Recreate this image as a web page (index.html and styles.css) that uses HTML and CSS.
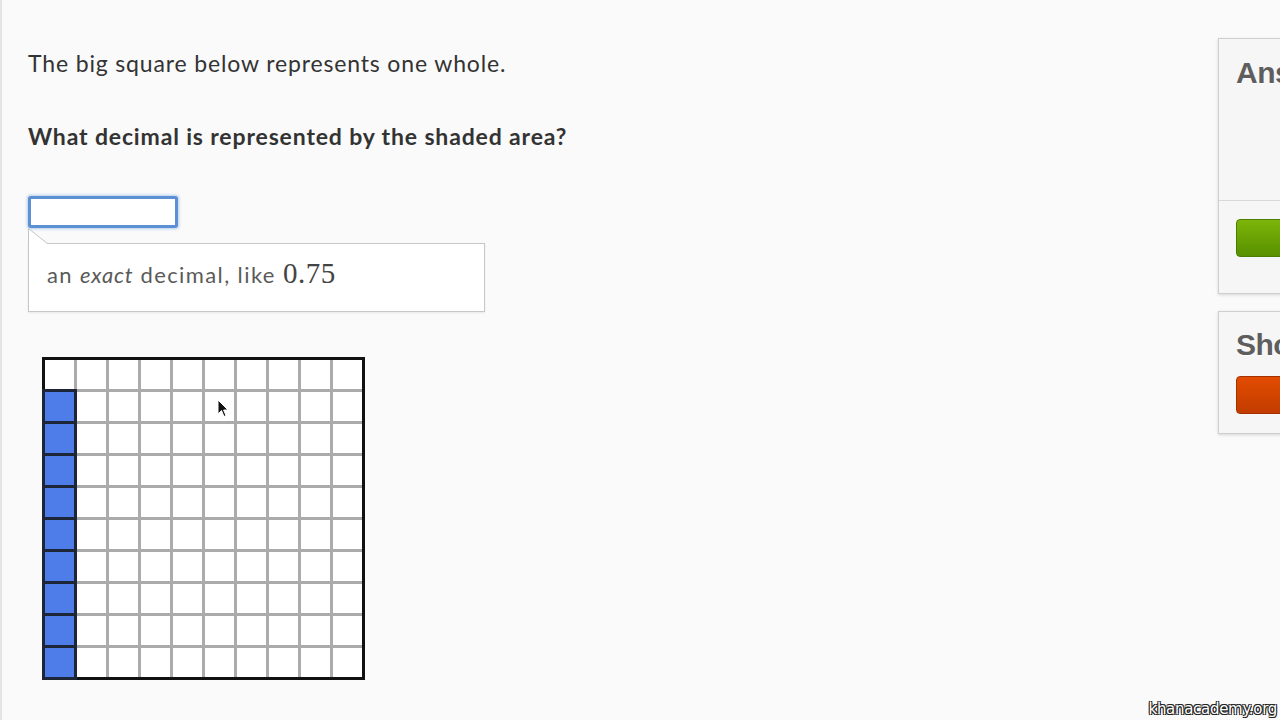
FILE: index.html
```html
<!DOCTYPE html>
<html>
<head>
<meta charset="utf-8">
<link rel="stylesheet" href="styles.css">
</head>
<body>
<div class="page">
  <main class="exercise">
    <p class="intro">The big square below represents one whole.</p>
    <p class="question">What decimal is represented by the shaded area?</p>
    <div class="answer">
      <input class="answer-input" type="text">
      <div class="hint">
        <svg class="tail" width="21" height="16" viewBox="0 0 21 16">
          <path d="M0.5 16 L0.5 0.5 L20 16 Z" fill="#fff"/>
          <path d="M0.5 16 L0.5 0.5 L20 16" fill="none" stroke="#c4c4c4" stroke-width="1"/>
        </svg>
        an <em>exact</em> decimal, like <span class="math">0.75</span>
      </div>
    </div>
    <div class="grid-wrap">
      <div class="grid" id="grid">
        <div class="c"></div><div class="c"></div><div class="c"></div><div class="c"></div><div class="c"></div><div class="c"></div><div class="c"></div><div class="c"></div><div class="c"></div><div class="c"></div>
        <div class="c s"></div><div class="c"></div><div class="c"></div><div class="c"></div><div class="c"></div><div class="c"></div><div class="c"></div><div class="c"></div><div class="c"></div><div class="c"></div>
        <div class="c s"></div><div class="c"></div><div class="c"></div><div class="c"></div><div class="c"></div><div class="c"></div><div class="c"></div><div class="c"></div><div class="c"></div><div class="c"></div>
        <div class="c s"></div><div class="c"></div><div class="c"></div><div class="c"></div><div class="c"></div><div class="c"></div><div class="c"></div><div class="c"></div><div class="c"></div><div class="c"></div>
        <div class="c s"></div><div class="c"></div><div class="c"></div><div class="c"></div><div class="c"></div><div class="c"></div><div class="c"></div><div class="c"></div><div class="c"></div><div class="c"></div>
        <div class="c s"></div><div class="c"></div><div class="c"></div><div class="c"></div><div class="c"></div><div class="c"></div><div class="c"></div><div class="c"></div><div class="c"></div><div class="c"></div>
        <div class="c s"></div><div class="c"></div><div class="c"></div><div class="c"></div><div class="c"></div><div class="c"></div><div class="c"></div><div class="c"></div><div class="c"></div><div class="c"></div>
        <div class="c s"></div><div class="c"></div><div class="c"></div><div class="c"></div><div class="c"></div><div class="c"></div><div class="c"></div><div class="c"></div><div class="c"></div><div class="c"></div>
        <div class="c s"></div><div class="c"></div><div class="c"></div><div class="c"></div><div class="c"></div><div class="c"></div><div class="c"></div><div class="c"></div><div class="c"></div><div class="c"></div>
        <div class="c s"></div><div class="c"></div><div class="c"></div><div class="c"></div><div class="c"></div><div class="c"></div><div class="c"></div><div class="c"></div><div class="c"></div><div class="c"></div>
      </div>
      <svg class="cursor" width="12" height="19" viewBox="0 0 12 19">
        <path d="M1 1 L1 15 L4.5 11.5 L7 17.5 L9 16.6 L6.6 11 L11 11 Z" fill="#111" stroke="#fff" stroke-width="1"/>
      </svg>
    </div>
  </main>
  <aside class="sidebar">
    <section class="panel panel-answer">
      <div class="panel-top">
        <h2 class="panel-title">Answer</h2>
      </div>
      <div class="panel-bottom">
        <button class="btn btn-green">Check Answer</button>
      </div>
    </section>
    <section class="panel panel-show">
      <h2 class="panel-title">Show solution</h2>
      <button class="btn btn-orange">Show hints</button>
    </section>
  </aside>
</div>
<div class="watermark">khanacademy.org</div>
</body>
</html>
```
FILE: styles.css
```css
html, body {
  margin: 0;
  padding: 0;
  overflow: hidden;
  width: 1280px;
  height: 720px;
}
body {
  background: #fafafa;
  font-family: Lato, "Open Sans", sans-serif;
  color: #333;
  position: relative;
  border-left: 2px solid #e4e4e4;
  box-sizing: border-box;
}
.page {
  display: flex;
  align-items: flex-start;
  width: 1600px;
}
.exercise {
  width: 1190px;
  padding-left: 26px;
  padding-top: 47px;
}
.intro {
  margin: 0;
  font-size: 23px;
  line-height: 32px;
  letter-spacing: 0.85px;
}
.question {
  margin: 41px 0 0;
  font-size: 23px;
  line-height: 32px;
  font-weight: bold;
  letter-spacing: 0.85px;
}
.answer {
  margin-top: 44px;
  position: relative;
}
.answer-input {
  display: block;
  width: 150px;
  height: 32px;
  box-sizing: border-box;
  border: 3px solid #5d90d2;
  border-radius: 3px;
  box-shadow: 0 0 3px 1px rgba(120, 165, 225, 0.55);
  background: #fff;
  margin: 0;
  outline: none;
}
.hint {
  position: relative;
  margin-top: 15px;
  width: 457px;
  height: 69px;
  box-sizing: border-box;
  border: 1px solid #c8c8c8;
  background: #fff;
  box-shadow: 0 1px 2px rgba(0, 0, 0, 0.08);
  padding: 12px 18px;
  font-size: 22px;
  color: #5a5a5a;
  line-height: 34px;
  letter-spacing: 1.4px;
}
.hint em {
  font-style: italic;
  letter-spacing: 0.8px;
}
.tail {
  position: absolute;
  left: -1px;
  top: -16px;
}
.math {
  font-family: "Liberation Serif", "DejaVu Serif", serif;
  font-size: 29px;
  color: #444;
  letter-spacing: 0.5px;
}
.grid-wrap {
  position: relative;
  margin-top: 45px;
  margin-left: 14px;
  width: 323px;
}
.grid {
  display: grid;
  grid-template-columns: repeat(10, 29px);
  grid-template-rows: repeat(10, 29px);
  gap: 3px;
  background: #ababab;
  border: 3px solid #111;
  width: 317px;
  height: 317px;
}
.c {
  background: #fff;
}
.c.s {
  background: #4e7de9;
  box-shadow: 0 0 0 3px #1c2636;
}
.cursor {
  position: absolute;
  left: 175px;
  top: 42px;
}
.sidebar {
  width: 300px;
  padding-top: 38px;
  display: flex;
  flex-direction: column;
  gap: 17px;
}
.panel {
  background: #f6f6f6;
  border: 1px solid #cfcfcf;
  box-shadow: 0 1px 3px rgba(0, 0, 0, 0.15);
}
.panel-top {
  height: 162px;
  padding: 16px 17px 0;
  box-sizing: border-box;
  border-bottom: 1px solid #d8d8d8;
}
.panel-title {
  margin: 0;
  font-family: "Liberation Sans", Arial, sans-serif;
  font-weight: bold;
  font-size: 30px;
  line-height: 36px;
  color: #5e5e5e;
  text-shadow: 0 1px 0 #fff;
  white-space: nowrap;
  letter-spacing: -0.5px;
}
.panel-bottom {
  height: 92px;
  padding: 18px 17px 0;
  box-sizing: border-box;
}
.btn {
  display: block;
  width: 260px;
  height: 38px;
  border: 0;
  border-radius: 4px;
  color: #fff;
  font-size: 18px;
  font-weight: bold;
  text-align: left;
  padding-left: 100px;
}
.btn-green {
  background: linear-gradient(#7db50a, #589000);
  border: 1px solid #4b7e00;
}
.btn-orange {
  background: linear-gradient(#e24c00, #c23c00);
  border: 1px solid #a33200;
}
.panel-show {
  height: 123px;
  box-sizing: border-box;
  padding: 15px 17px 0;
}
.panel-show .btn {
  margin-top: 13px;
}
.watermark {
  position: absolute;
  right: 3px;
  bottom: 2px;
  font-family: "DejaVu Sans", sans-serif;
  font-size: 15px;
  color: #fff;
  letter-spacing: -0.3px;
  text-shadow: -1px -1px 0 #222, 1px -1px 0 #222, -1px 1px 0 #222, 1px 1px 0 #222;
}
```
